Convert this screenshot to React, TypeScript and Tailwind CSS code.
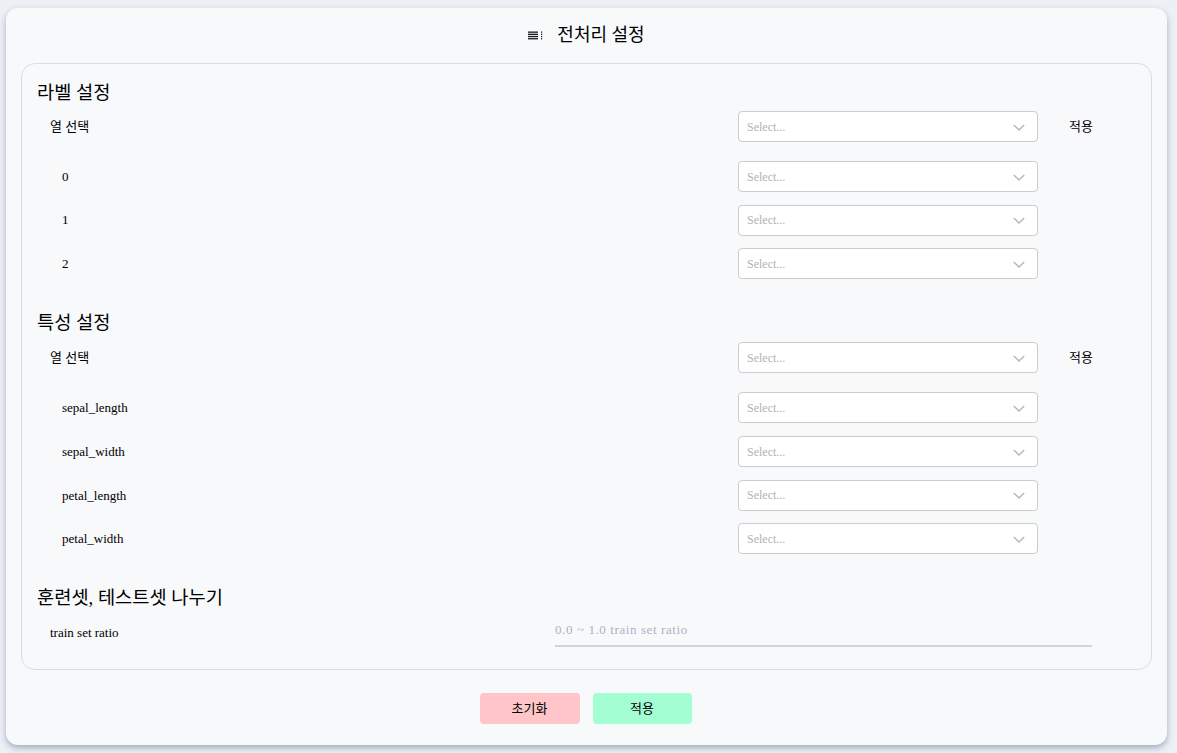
import React from 'react'

const font = { fontFamily: '"Liberation Serif", "Noto Sans CJK KR", serif' }

const SelectBox = () => (
  <div className="flex h-[31px] w-[300px] items-center justify-between rounded-[4px] border border-[#cccccc] bg-white pl-2 pr-[8px]">
    <span className="text-[12px] text-[#b3b3b3]">Select...</span>
    <svg width="20" height="20" viewBox="0 0 20 20" className="text-[#b8b8b8]">
      <path d="M4.8 8 L10 13 L15.2 8" fill="none" stroke="currentColor" strokeWidth="1.5" />
    </svg>
  </div>
)

const Row = ({ label, indent, apply }: { label: string; indent: boolean; apply?: boolean }) => (
  <div className="flex items-center">
    <div className={`flex-1 text-[13px] text-black ${indent ? 'pl-[25px]' : 'pl-[13px]'}`}>{label}</div>
    <SelectBox />
    <div className="w-[98px] pl-[31px] text-[13px] text-black">{apply ? '적용' : ''}</div>
  </div>
)

const Heading = ({ children }: { children: React.ReactNode }) => (
  <h2 className="h-[28px] text-[18.7px] leading-[28px] text-black">{children}</h2>
)

const MenuIcon = () => (
  <svg width="15" height="9" viewBox="0 0 15 9" className="text-[#1a1a1a]">
    <rect x="0" y="0.5" width="10" height="1.3" fill="currentColor" />
    <rect x="0" y="2.7" width="10" height="1.3" fill="currentColor" />
    <rect x="0" y="4.9" width="10" height="1.3" fill="currentColor" />
    <rect x="0" y="7.1" width="10" height="1.3" fill="currentColor" />
    <rect x="13" y="0.5" width="1.2" height="1.3" fill="currentColor" />
    <rect x="13" y="2.7" width="1.2" height="1.3" fill="currentColor" />
    <rect x="13" y="4.9" width="1.2" height="1.3" fill="currentColor" />
    <rect x="13" y="7.1" width="1.2" height="1.3" fill="currentColor" />
  </svg>
)

export default function App() {
  const labels = ['0', '1', '2']
  const features = ['sepal_length', 'sepal_width', 'petal_length', 'petal_width']
  return (
    <div className="min-h-[753px] bg-[#edf0f5] px-[6px] pt-[8px]" style={font}>
      <div className="flex h-[737px] w-[1161px] flex-col rounded-[12px] bg-[#f8f9fb] shadow-[0_3px_6px_rgba(100,116,150,0.55)]">
        <div className="flex h-[55px] items-center justify-center gap-[14px] pb-[1px]">
          <MenuIcon />
          <span className="text-[18px] text-black">전처리 설정</span>
        </div>

        <div className="mx-[15px] h-[607px] rounded-[14px] border border-[#dcdde0] px-[15px] pt-[15px]">
          <Heading>라벨 설정</Heading>
          <div className="mt-[4px] flex flex-col">
            <Row label="열 선택" indent={false} apply />
            <div className="mt-[19px] flex flex-col gap-[12.7px]">
              {labels.map((l) => (
                <Row key={l} label={l} indent />
              ))}
            </div>
          </div>

          <div className="mt-[30px]">
            <Heading>특성 설정</Heading>
          </div>
          <div className="mt-[5px] flex flex-col">
            <Row label="열 선택" indent={false} apply />
            <div className="mt-[19px] flex flex-col gap-[12.7px]">
              {features.map((f) => (
                <Row key={f} label={f} indent />
              ))}
            </div>
          </div>

          <div className="mt-[30px]">
            <Heading>훈련셋, 테스트셋 나누기</Heading>
          </div>
          <div className="mt-[5px] flex items-center">
            <div className="w-[518px] pl-[13px] text-[13px] text-black">train set ratio</div>
            <div className="w-[537px] border-b-2 border-[#cdd5e3] pb-[4px]">
              <span className="text-[13px] tracking-[0.6px] text-[#a9b3c4]">0.0 ~ 1.0 train set ratio</span>
            </div>
          </div>
        </div>

        <div className="flex flex-1 items-center justify-center gap-[13px] pr-[2px] pt-[2px]">
          <button className="h-[31px] w-[100px] rounded-[4px] bg-[#ffc5c8] text-[13px] text-black">초기화</button>
          <button className="h-[31px] w-[99px] rounded-[4px] bg-[#a4fed3] text-[13px] text-black">적용</button>
        </div>
      </div>
    </div>
  )
}
